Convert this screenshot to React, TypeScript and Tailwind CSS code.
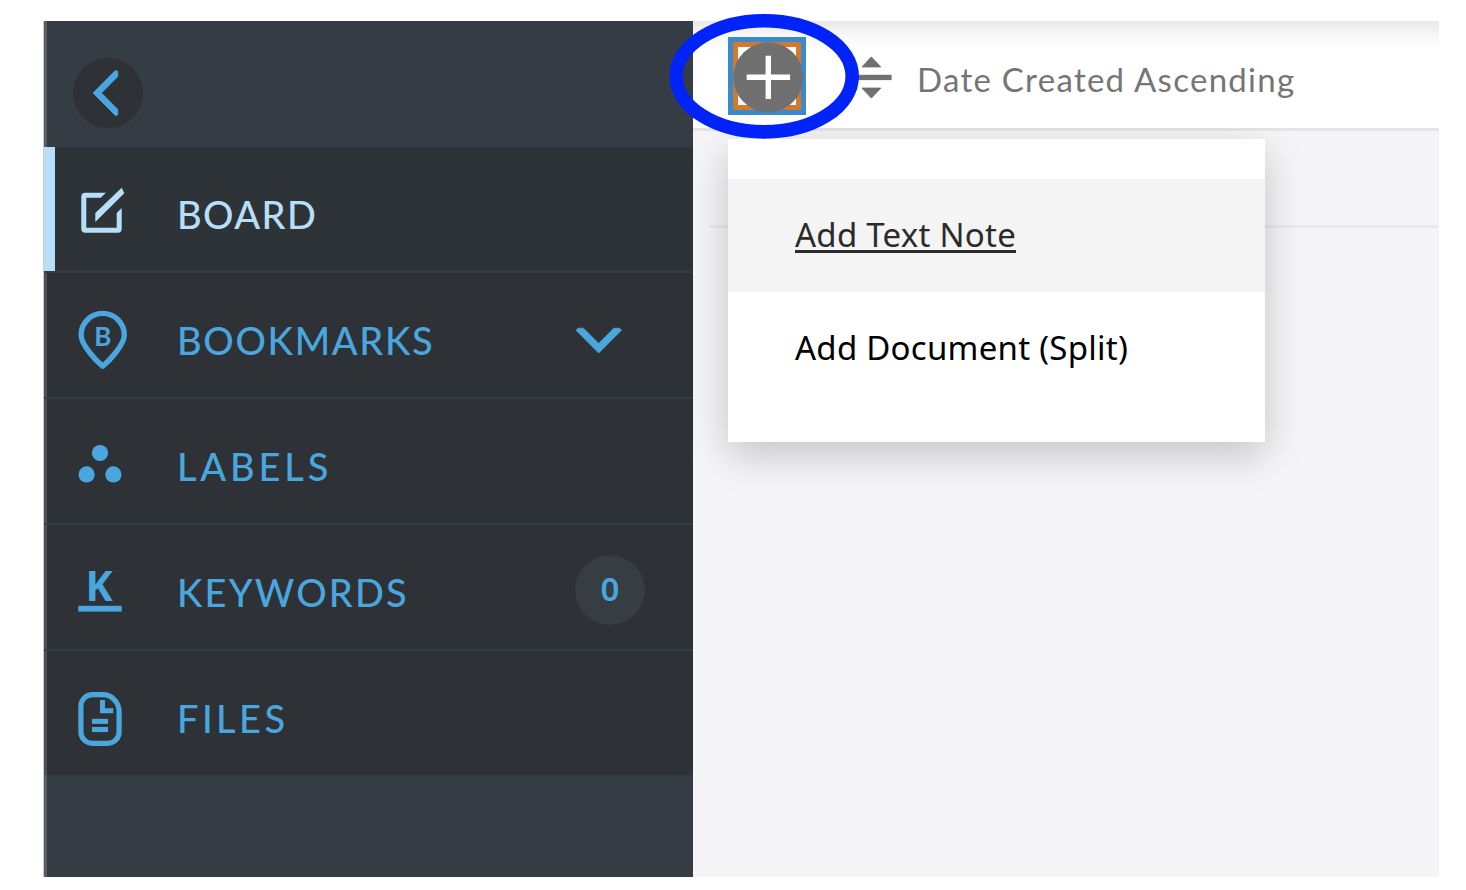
import type { ReactNode } from "react";

const BoardIcon = () => (
  <svg width="60" height="72" viewBox="0 0 60 72" fill="currentColor">
    <path d="M32 19.7H11.3a4 4 0 0 0-4 4v32a4 4 0 0 0 4 4h32.4a4 4 0 0 0 4-4V35l-5 5v14.7H12.3v-30h14.4z" />
    <path d="M47.7 14.7l2.6 5.6L21.3 49v-9z" />
  </svg>
);

const BookmarkIcon = () => (
  <svg width="60" height="72" viewBox="0 0 60 72">
    <path
      d="M28.7 67.3C22 61.5 7.1 46 7.1 36a21.6 21.6 0 0 1 43.2 0C50.3 46 35.4 61.5 28.7 67.3z"
      fill="none"
      stroke="currentColor"
      strokeWidth="5.4"
      strokeLinejoin="round"
    />
    <text x="28.9" y="47.4" textAnchor="middle" fill="currentColor" className="font-['Lato',sans-serif] text-[26px] font-bold">
      B
    </text>
  </svg>
);

const LabelsIcon = () => (
  <svg width="60" height="72" viewBox="0 0 60 72" fill="currentColor">
    <circle cx="26" cy="28" r="8.1" />
    <circle cx="12.6" cy="49.4" r="8.1" />
    <circle cx="39.4" cy="49.4" r="8.1" />
  </svg>
);

const KeywordsIcon = () => (
  <svg width="60" height="72" viewBox="0 0 60 72" fill="currentColor">
    <text x="11.6" y="49.6" className="font-['Open_Sans',sans-serif] text-[41px] font-bold">
      K
    </text>
    <rect x="4.3" y="54.8" width="43.4" height="5.8" />
  </svg>
);

const FilesIcon = () => (
  <svg width="60" height="72" viewBox="0 0 60 72" fill="currentColor">
    <path
      d="M18.4 17.6H29c8.9 0 16.1 8 16.1 16.9v20.4a11.5 11.5 0 0 1-11.5 11.5H18.4A11.5 11.5 0 0 1 6.9 54.9V29.1a11.5 11.5 0 0 1 11.5-11.5z"
      fill="none"
      stroke="currentColor"
      strokeWidth="5.2"
    />
    <path d="M26 23h5v8.2h8.3v5.1H26z" />
    <rect x="18" y="41.8" width="16" height="5.1" />
    <rect x="18" y="50" width="16" height="5.1" />
  </svg>
);

const ChevronDown = () => (
  <svg width="48" height="28" viewBox="0 0 48 28" fill="currentColor" className="mr-[70px] mt-[10px]">
    <path d="M3 2.2h5.4l15.3 15.2L39 2.2h5.6l1.8 2L23.7 27 1 4.2z" stroke="currentColor" strokeWidth="0.8" strokeLinejoin="round" />
  </svg>
);

type RowProps = { icon: ReactNode; label: string; spacing: string; end?: ReactNode; active?: boolean };

const NavRow = ({ icon, label, spacing, end, active }: RowProps) => (
  <li
    className={
      active
        ? "flex h-[124px] items-center border-l-[11px] border-[#b8dffa] bg-[#2e3337] pl-[19px] text-[#b8dffa]"
        : "flex h-[124px] items-center border-l-[3px] border-[#4d5257] bg-[#2e3136] pl-[27px] text-[#49a6df]"
    }
  >
    {icon}
    <span className={`flex-1 pl-[43px] pt-[9px] font-['Lato',sans-serif] text-[38px] font-medium leading-[46px] ${spacing}`}>{label}</span>
    {end}
  </li>
);

const Sidebar = () => (
  <aside className="relative z-10 flex w-[649px] shrink-0 flex-col bg-[#363c43]">
    <div className="flex h-[126px] border-l-[3px] border-[#575d61] pl-[26px] pt-[37px]">
      <button className="flex size-[70px] items-center justify-center rounded-full bg-[#2e3136] text-[#49a6df]">
        <svg width="70" height="70" viewBox="0 0 70 70" fill="currentColor">
          <path d="M42.3 12.6l2.4.8v5.2L28.4 35l16.3 16.4v5.4l-2.2.8L20.2 35z" stroke="currentColor" strokeWidth="1" strokeLinejoin="round" />
        </svg>
      </button>
    </div>
    <ul className="flex flex-col gap-[2px] bg-[#363e42]">
      <NavRow active icon={<BoardIcon />} label="BOARD" spacing="tracking-[1.4px]" />
      <NavRow icon={<BookmarkIcon />} label="BOOKMARKS" spacing="tracking-[1.65px]" end={<ChevronDown />} />
      <NavRow icon={<LabelsIcon />} label="LABELS" spacing="tracking-[3.8px]" />
      <NavRow
        icon={<KeywordsIcon />}
        label="KEYWORDS"
        spacing="tracking-[2.2px]"
        end={
          <span className="mr-12 mt-[6px] flex size-[70px] items-center justify-center rounded-full bg-[#363d43] pb-[3px] font-['Noto_Sans',sans-serif] text-[33px] font-semibold">
            0
          </span>
        }
      />
      <NavRow icon={<FilesIcon />} label="FILES" spacing="tracking-[3.4px]" />
    </ul>
    <div className="flex-1 border-l-[3px] border-[#575d61]" />
  </aside>
);

const AddButton = () => (
  <button className="relative size-[78px] border-[5px] border-[#3a8acb]">
    <span className="block size-full border-[5px] border-[#d1792c] bg-white" />
    <svg className="absolute -left-[5px] -top-[5px]" width="78" height="78" viewBox="0 0 78 78">
      <circle cx="40.3" cy="40.3" r="35" fill="#707070" />
      <path d="M18.7 40.3h43.4M40.3 18.7v43.4" stroke="#fff" strokeWidth="5.4" />
    </svg>
    <svg className="absolute -left-[66px] -top-[30px] z-20 max-w-none" width="196" height="130" viewBox="0 0 196 130">
      <ellipse cx="97.2" cy="64.3" rx="88" ry="55.6" fill="none" stroke="#0023f7" strokeWidth="13.6" />
    </svg>
  </button>
);

const SortIcon = () => (
  <svg width="38" height="44" viewBox="0 0 38 44" fill="#707070">
    <path d="M17.3.9l9.4 10H8z" stroke="#707070" strokeWidth="1" strokeLinejoin="round" />
    <rect x="1" y="18.8" width="36.6" height="5.3" />
    <path d="M8 32.1h18.8l-9.4 10z" stroke="#707070" strokeWidth="1" strokeLinejoin="round" />
  </svg>
);

export default function App() {
  return (
    <div className="h-[890px] w-[1466px] bg-white pl-[44px] pt-[21px]">
      <div className="flex h-[856px] w-[1395px] shadow-[-1px_0_0_#c9cbcd]">
        <Sidebar />
        <main className="flex flex-1 flex-col bg-[#f5f5f7]">
          <header className="relative z-20 flex h-[107px] shrink-0 items-start bg-linear-to-b from-[#e8e8e8] from-0% via-[#f7f7f7] via-[14px] to-white to-[30px] pl-[35px] pt-4">
            <AddButton />
            <div className="ml-[48px] mt-[19px]">
              <SortIcon />
            </div>
            <span className="-mt-[1px] ml-[25px] pt-[23px] font-['Lato',sans-serif] text-[33px] leading-10 tracking-[1.28px] text-[#757575]">
              Date Created Ascending
            </span>
          </header>
          <div className="h-[3px] shrink-0 bg-[#e5e5e7]" />
          <div className="relative h-[94px] shrink-0">
            <div className="absolute left-[35px] top-2 z-10 flex h-[303px] w-[537px] flex-col bg-white pt-10 font-['Noto_Sans',sans-serif] text-[33px] tracking-[0.25px] shadow-[0_13px_38px_rgba(0,0,0,0.2)]">
              <a className="flex h-[113px] items-center bg-[#f4f4f4] pb-[2px] pl-[67px] text-[#2b2b2b] underline decoration-[2.5px] underline-offset-[3px]">
                Add Text Note
              </a>
              <a className="flex h-[112px] items-center pb-px pl-[67px] text-black">Add Document (Split)</a>
            </div>
          </div>
          <div className="ml-4 h-[3px] shrink-0 bg-[#eaeaec]" />
        </main>
      </div>
    </div>
  );
}
